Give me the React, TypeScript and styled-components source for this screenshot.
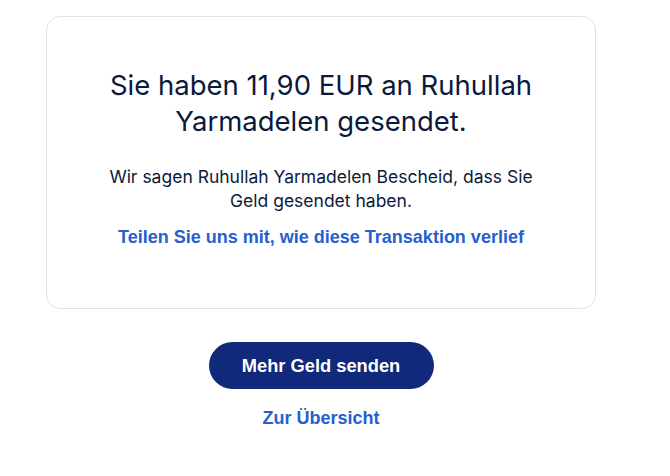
import React from 'react';
import styled, { createGlobalStyle } from 'styled-components';

const GlobalStyle = createGlobalStyle`
  body {
    margin: 0;
    background: #ffffff;
    font-family: Inter, "Liberation Sans", Arial, sans-serif;
    -webkit-font-smoothing: antialiased;
  }
`;

const Page = styled.main`
  width: 550px;
  margin-left: 46px;
  padding-top: 16px;
  display: flex;
  flex-direction: column;
  align-items: center;
`;

const Card = styled.section`
  box-sizing: border-box;
  width: 100%;
  height: 293px;
  padding: 50px 30px 0;
  border: 1px solid #dfe1e4;
  border-radius: 14px;
  display: flex;
  flex-direction: column;
  align-items: center;
  text-align: center;
`;

const Heading = styled.h1`
  margin: 0;
  width: 450px;
  font-size: 27.5px;
  line-height: 36px;
  font-weight: 400;
  color: #0b1a3b;
`;

const Message = styled.p`
  margin: 26px 0 0;
  width: 445px;
  font-size: 17.5px;
  line-height: 24px;
  color: #0b1a3b;
`;

const TextLink = styled.a<{ $top?: number }>`
  display: block;
  margin-top: ${(p) => p.$top ?? 0}px;
  font-family: "Liberation Sans", Arial, sans-serif;
  font-weight: 700;
  font-size: 18px;
  line-height: 24px;
  color: #2560cf;
  text-decoration: none;
  cursor: pointer;
`;

const PrimaryButton = styled.button`
  margin-top: 33px;
  width: 225px;
  height: 47px;
  border: none;
  border-radius: 24px;
  background: #10297a;
  color: #ffffff;
  font-family: "Liberation Sans", Arial, sans-serif;
  font-weight: 700;
  font-size: 18.3px;
  cursor: pointer;
`;

export default function App() {
  return (
    <>
      <GlobalStyle />
      <Page>
        <Card>
          <Heading>Sie haben 11,90 EUR an Ruhullah Yarmadelen gesendet.</Heading>
          <Message>
            Wir sagen Ruhullah Yarmadelen Bescheid, dass Sie Geld gesendet haben.
          </Message>
          <TextLink $top={12}>Teilen Sie uns mit, wie diese Transaktion verlief</TextLink>
        </Card>
        <PrimaryButton>Mehr Geld senden</PrimaryButton>
        <TextLink $top={17}>Zur Übersicht</TextLink>
      </Page>
    </>
  );
}
